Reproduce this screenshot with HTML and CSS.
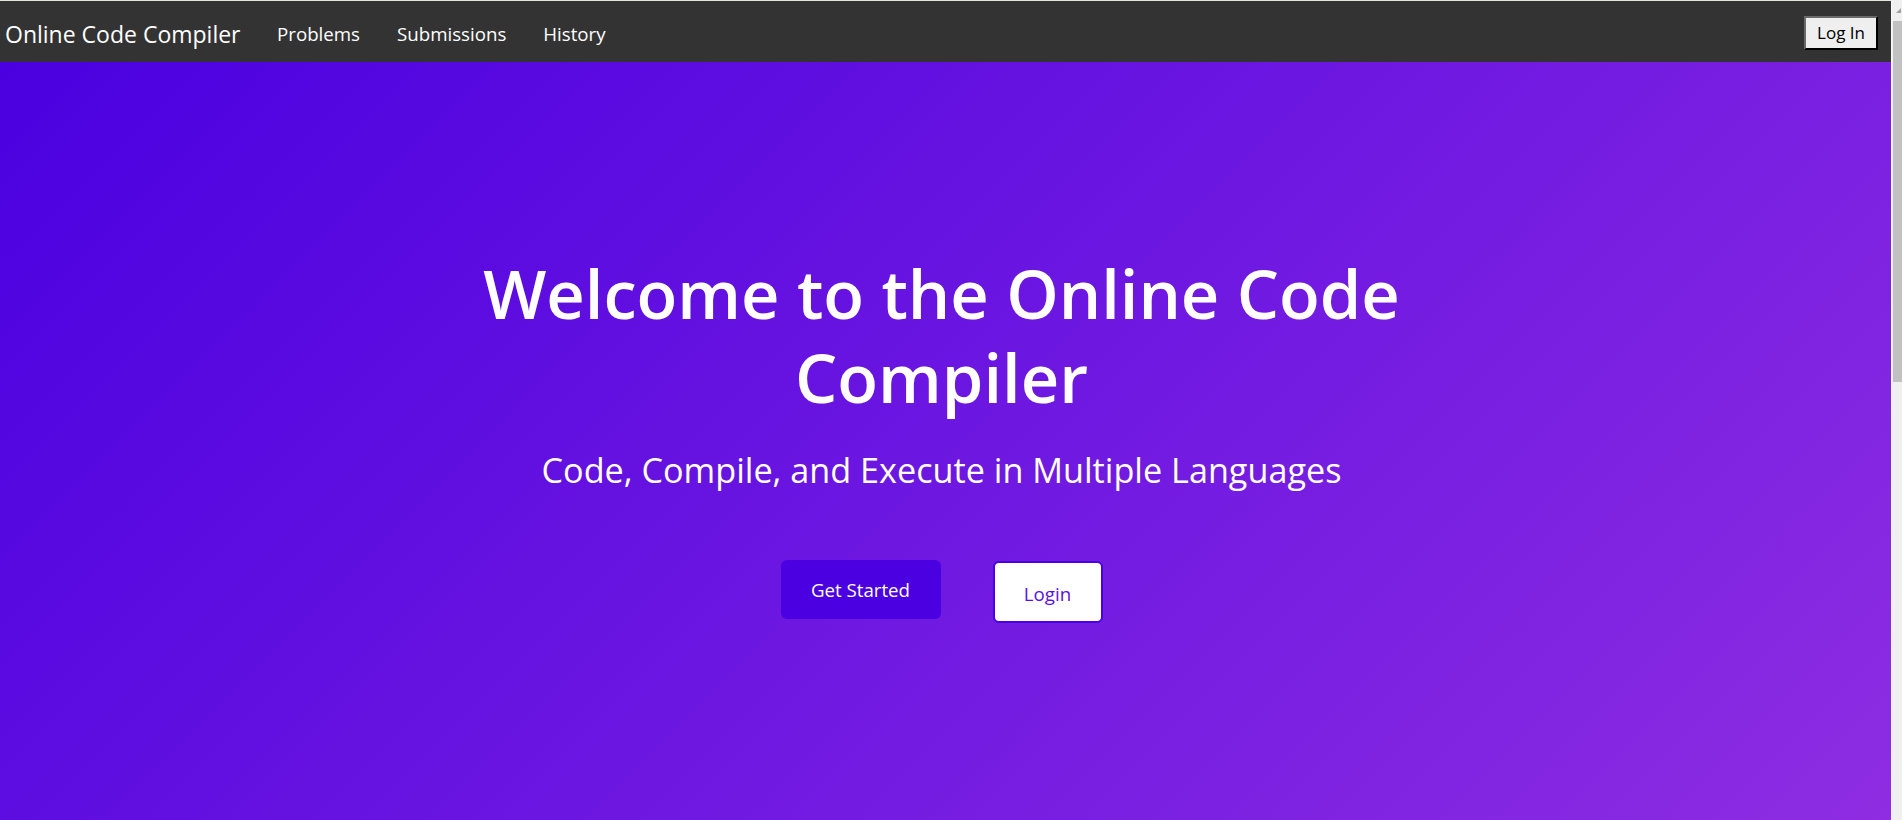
FILE: index.html
```html
<!DOCTYPE html>
<html lang="en">
<head>
<meta charset="utf-8">
<title>Online Code Compiler</title>
<link rel="stylesheet" href="styles.css">
</head>
<body>
<div class="page">
  <nav class="navbar">
    <div class="nav-left">
      <a class="brand" href="#">Online Code Compiler</a>
      <ul class="nav-links">
        <li><a href="#">Problems</a></li>
        <li><a href="#">Submissions</a></li>
        <li><a href="#">History</a></li>
      </ul>
    </div>
    <button class="login-btn" type="button">Log In</button>
  </nav>
  <main class="hero">
    <div class="hero-inner">
      <h1 class="hero-title">Welcome to the Online Code Compiler</h1>
      <p class="hero-sub">Code, Compile, and Execute in Multiple Languages</p>
      <div class="hero-actions">
        <a class="btn btn-primary" href="#">Get Started</a>
        <a class="btn btn-outline" href="#">Login</a>
      </div>
    </div>
  </main>
</div>
<div class="scrollbar">
  <div class="scroll-arrow"></div>
  <div class="scroll-thumb"></div>
</div>
</body>
</html>
```

FILE: styles.css
```css
html, body {
  margin: 0;
  padding: 0;
  height: 820px;
  overflow: hidden;
}
body {
  display: flex;
  font-family: "Open Sans", "Noto Sans", sans-serif;
  background: #f0f0f0;
}
.page {
  flex: 1;
  display: flex;
  flex-direction: column;
  border-top: 1px solid #e4e4dc;
}
.navbar {
  height: 61px;
  background: #333333;
  display: flex;
  align-items: center;
  justify-content: space-between;
  padding: 0 13px 0 5px;
}
.nav-left {
  display: flex;
  align-items: center;
}
.brand {
  color: #ffffff;
  text-decoration: none;
  font-size: 23px;
  padding-top: 4px;
}
.nav-links {
  display: flex;
  list-style: none;
  margin: 0;
  padding: 0 0 0 18px;
}
.nav-links a {
  display: block;
  color: #ffffff;
  text-decoration: none;
  font-size: 18.7px;
  padding: 4px 18.5px 0;
}
.login-btn {
  font-family: "Open Sans", "Noto Sans", sans-serif;
  font-size: 17px;
  color: #000;
  background: #efefef;
  border-style: solid;
  border-width: 2px 2px 2px 2px;
  border-color: #6a6a6a #000 #000 #6a6a6a;
  height: 34px;
  width: 74px;
  padding: 0;
  margin-top: 2px;
}
.hero {
  flex: 1;
  background: linear-gradient(135deg, #4a00e0 0%, #8e2de2 100%);
  display: flex;
  justify-content: center;
  padding: 0 8px 0 0;
}
.hero-inner {
  display: flex;
  flex-direction: column;
  align-items: center;
  text-align: center;
  padding-top: 190px;
}
.hero-title {
  margin: 0;
  max-width: 1000px;
  color: #ffffff;
  font-size: 66.8px;
  font-weight: 600;
  line-height: 84px;
}
.hero-sub {
  margin: 28px 0 0;
  color: #ffffff;
  font-size: 34.2px;
  line-height: 44px;
}
.hero-actions {
  display: flex;
  align-items: flex-start;
  gap: 52px;
  margin-top: 68px;
}
.btn {
  display: flex;
  align-items: center;
  justify-content: center;
  text-decoration: none;
  font-size: 18.7px;
  border-radius: 6px;
  box-sizing: border-box;
}
.btn-primary {
  width: 160px;
  height: 59px;
  background: #4a00e0;
  color: #ffffff;
}
.btn-outline {
  width: 110px;
  height: 62px;
  margin-top: 1px;
  background: #ffffff;
  color: #5a10e2;
  border: 2px solid #4a00e0;
  padding-top: 2px;
}
.scrollbar {
  width: 10px;
  border-left: 1px solid #f7f7f7;
  background: #f0f0f0;
  display: flex;
  flex-direction: column;
  align-items: flex-end;
}
.scroll-arrow {
  width: 9px;
  height: 21px;
  position: relative;
}
.scroll-arrow::after {
  content: "";
  position: absolute;
  left: 3px;
  top: 8px;
  border-left: 5px solid transparent;
  border-bottom: 5px solid #a3a3a3;
}
.scroll-thumb {
  width: 9px;
  height: 361px;
  background: #c1c1c1;
}
```
